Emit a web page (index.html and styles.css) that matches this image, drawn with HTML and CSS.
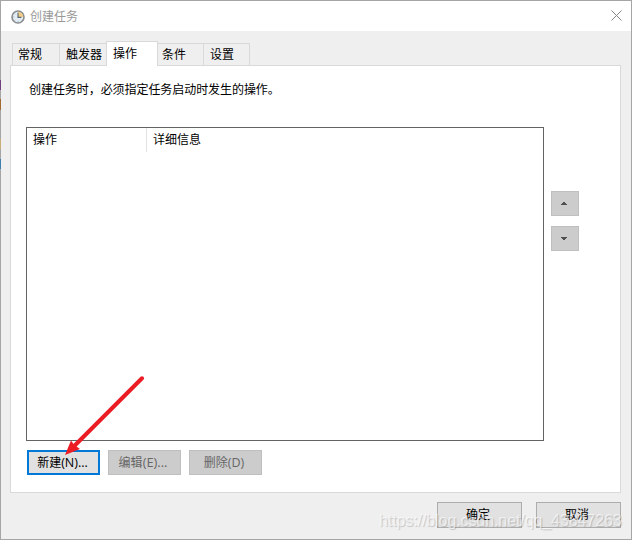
FILE: index.html
```html
<!DOCTYPE html>
<html lang="zh-CN">
<head>
<meta charset="utf-8">
<title>创建任务</title>
<link rel="stylesheet" href="styles.css">
</head>
<body>
<div class="window">
  <header class="titlebar">
    <svg class="clock" width="14" height="14" viewBox="0 0 14 14">
      <circle cx="7" cy="7" r="6" fill="#e3edf3" stroke="#8a8c8e" stroke-width="1.6"/>
      <path d="M7 7V1.8A5.2 5.2 0 0 1 12.2 7Z" fill="#f3cd83"/>
      <path d="M7 2.8V7.4H10.4" fill="none" stroke="#5c6973" stroke-width="1.1"/>
      <path d="M2.2 7h1M7 10.8v1M3.6 3.6l.6.6M3.6 10.4l.6-.6M10.4 10.4l-.6-.6" stroke="#91a3af" stroke-width=".8"/>
    </svg>
    <span class="title">创建任务</span>
    <svg class="close" width="11" height="11" viewBox="0 0 11 11"><path d="M.5 .5l10 10M10.5 .5l-10 10" stroke="#858585" stroke-width="1"/></svg>
  </header>
  <main class="body">
    <nav class="tabs">
      <span class="tab general">常规</span>
      <span class="tab trigger">触发器</span>
      <span class="tab active">操作</span>
      <span class="tab condition">条件</span>
      <span class="tab settings">设置</span>
    </nav>
    <section class="panel">
      <p class="hint">创建任务时，必须指定任务启动时发生的操作。</p>
      <div class="content">
        <div class="list">
          <div class="list-head"><span class="col action">操作</span><span class="col detail">详细信息</span></div>
        </div>
        <div class="order">
          <button class="btn disabled move"><svg width="6" height="3" viewBox="0 0 6 3" shape-rendering="crispEdges"><path d="M2 0h2v1h1v1h1v1H0V2h1V1h1z" fill="#505050"/></svg></button>
          <button class="btn disabled move"><svg width="6" height="3" viewBox="0 0 6 3" shape-rendering="crispEdges"><path d="M0 0h6v1H5v1H4v1H2V2H1V1H0z" fill="#505050"/></svg></button>
        </div>
      </div>
      <div class="actions">
        <button class="btn primary">新建<span class="key">(N)...</span></button>
        <button class="btn disabled edit">编辑<span class="key">(E)...</span></button>
        <button class="btn disabled delete">删除<span class="key">(D)</span></button>
      </div>
    </section>
    <footer class="footer">
      <button class="btn dialog">确定</button>
      <button class="btn dialog">取消</button>
    </footer>
  </main>
  <svg class="arrow" width="82" height="82" viewBox="0 0 82 82">
    <path d="M78 3.3L10 71.3" stroke="#ec1c24" stroke-width="4.1" stroke-linecap="round"/>
    <path d="M1 80L7 65.5L9.5 69L12.5 71.5L16 74Z" fill="#ec1c24"/>
  </svg>
  <span class="watermark">https://blog.csdn.net/qq_43847263</span>
</div>
<i class="edge"></i>
</body>
</html>
```

FILE: styles.css
```css
* { box-sizing: border-box; }
body {
  margin: 0;
  font: 12px/16px "Open Sans", "Noto Sans CJK SC", sans-serif;
  color: #000;
}
.window {
  position: relative;
  width: 632px;
  height: 540px;
  border: 1px solid #a5a5a5;
  background: #efefef;
  overflow: hidden;
}
.titlebar {
  display: flex;
  align-items: center;
  height: 30px;
  padding: 0 9px;
  background: #fff;
}
.clock { margin: 1px 0 0 1px; }
.title { margin-left: 5px; padding-top: 1px; color: #999; }
.close { margin-left: auto; margin-top: -2px; }
.body { padding: 10px 10px 0 9px; }
.tabs {
  display: flex;
  align-items: flex-end;
  height: 25px;
  padding-left: 2px;
  position: relative;
  z-index: 1;
  margin-bottom: -1px;
}
.tab {
  height: 22px;
  margin-bottom: 1px;
  padding: 3px 0 0 6px;
  border: 1px solid #d9d9d9;
  border-width: 1px 1px 0 0;
  white-space: nowrap;
}
.general { width: 48px; padding-left: 5px; border-left-width: 1px; }
.trigger { width: 46px; border-right: 0; }
.tab.active {
  width: 52px;
  height: 25px;
  margin-bottom: 0;
  padding-top: 4px;
  border-left-width: 1px;
  background: #fff;
}
.tabs .condition { width: 46px; padding-left: 4px; }
.settings { width: 46px; }
.panel {
  height: 428px;
  border: 1px solid #d9d9d9;
  background: #fff;
  padding: 16px 0 0 15px;
}
.hint { margin: 0 0 0 3px; height: 45px; letter-spacing: -.06px; }
.content { display: flex; gap: 7px; }
.list { width: 518px; height: 314px; border: 1px solid #646464; }
.list-head { display: flex; height: 24px; }
.col { padding: 4px 6px 0; }
.action { width: 120px; border-right: 1px solid #e2e2e2; }
.order { display: flex; flex-direction: column; gap: 10px; padding-top: 64px; }
.actions { display: flex; gap: 8px; padding: 9px 0 0 1px; }
.btn {
  width: 73px;
  height: 25px;
  padding: 0;
  border: 1px solid #adadad;
  border-radius: 0;
  background: #e1e1e1;
  color: #000;
  font: inherit;
  white-space: nowrap;
}
.btn.disabled { background: #ccc; border-color: #bfbfbf; color: #666; }
.btn.primary { border: 2px solid #0078d7; padding-right: 2px; }
.key { font-size: 12.5px; line-height: 1; }
.btn.edit { padding-right: 3px; }
.btn.edit .key { font-size: 12.8px; }
.btn.delete { padding-right: 3px; }
.btn.move {
  display: flex;
  align-items: center;
  justify-content: center;
  width: 28px;
  padding-right: 2px;
}
.footer { display: flex; justify-content: flex-end; gap: 14px; padding-top: 9px; }
.btn.dialog { width: 85px; height: 26px; padding-right: 3px; }
.arrow { position: absolute; left: 63px; top: 374px; }
.watermark {
  position: absolute;
  left: 378px;
  top: 510px;
  font: 16px/20px "Liberation Sans", sans-serif;
  letter-spacing: -.09px;
  color: rgba(255, 255, 255, .62);
  text-shadow: 1px 1px 1px rgba(0, 0, 0, .18);
  white-space: nowrap;
}
/* Desktop showing through the left window border. */
.edge {
  position: absolute;
  left: 0;
  top: 80px;
  width: 1px;
  height: 90px;
  background: linear-gradient(#704080 0 10px, #a5a5a5 10px 19px, #a06a30 19px 30px, #a5a5a5 30px 59px, #c8ad75 59px 69px, #a5a5a5 69px 79px, #4080b0 79px 89px, #a5a5a5 89px);
}
```
